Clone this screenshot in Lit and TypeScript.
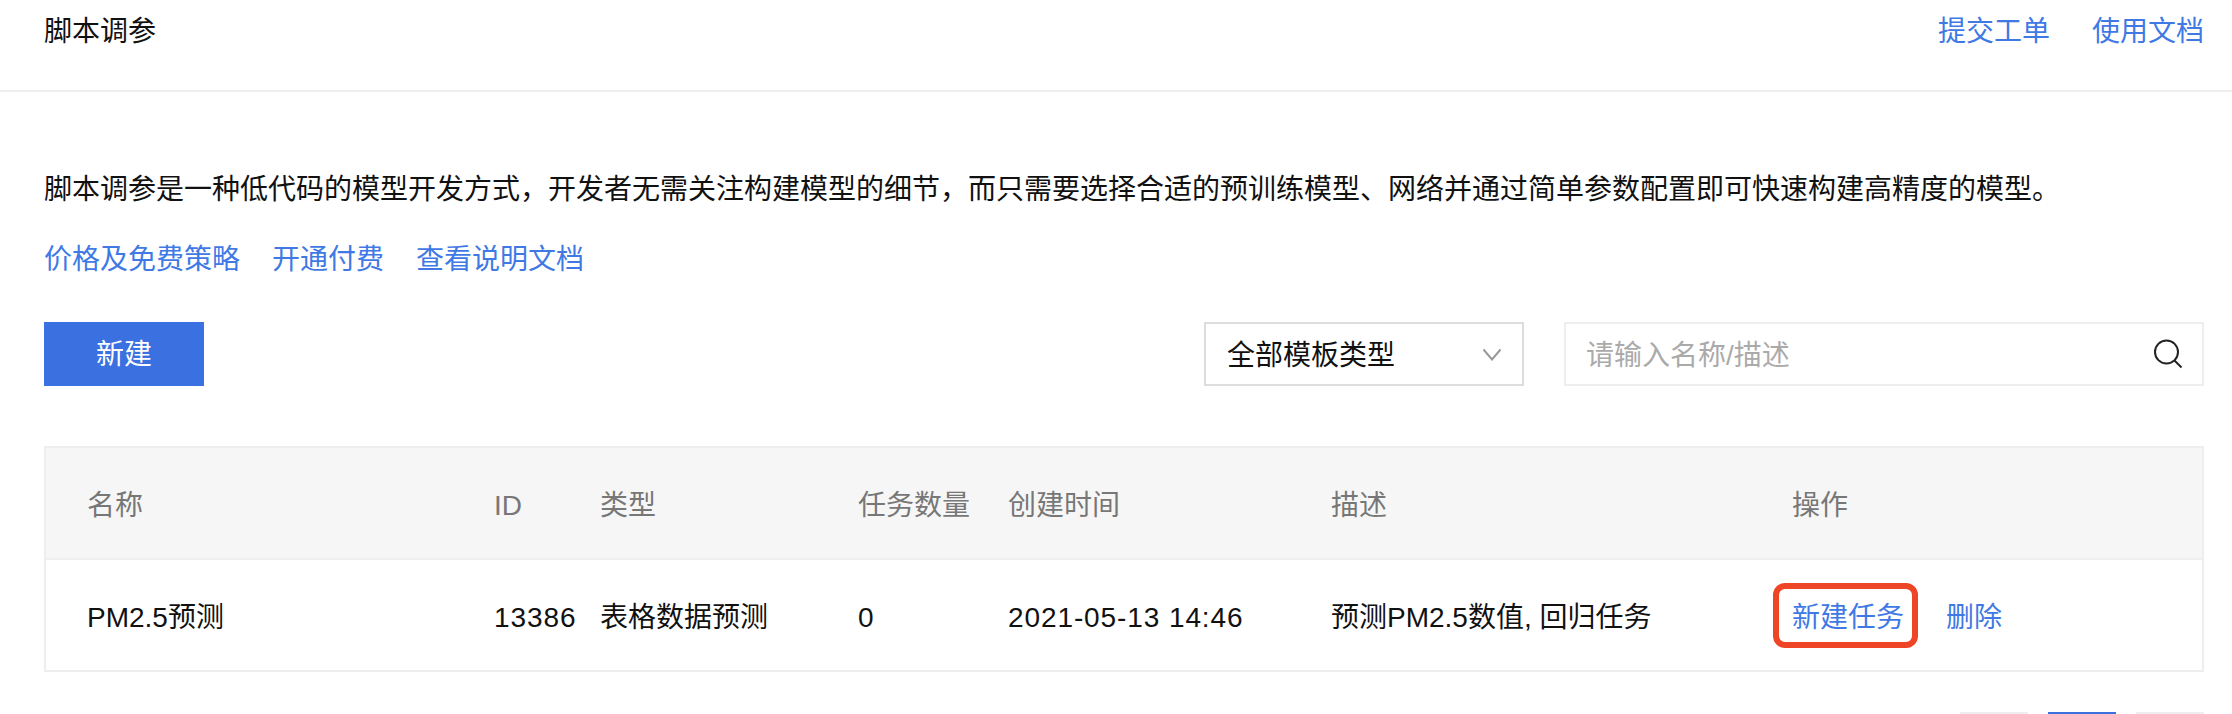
import { LitElement, html, css } from "lit";
import { customElement } from "lit/decorators.js";

@customElement("app-root")
export class AppRoot extends LitElement {
  static styles = css`
    :host {
      display: block;
      width: 2232px;
      height: 714px;
      overflow: hidden;
      background: #fff;
      color: #111;
      font-family: "Liberation Sans", "Noto Sans CJK SC", sans-serif;
      font-size: 28px;
      font-weight: 400;
      line-height: 40px;
    }
    a { color: #4079e4; text-decoration: none; }
    .head {
      height: 90px;
      box-sizing: content-box;
      border-bottom: 2px solid #eeeeee;
      padding: 0 28px 0 44px;
      display: flex;
      justify-content: space-between;
      align-items: center;
    }
    .head > div { margin-top: -26px; }
    .head-links { display: flex; gap: 42px; }
    .body { padding: 78px 28px 0 44px; }
    .desc { height: 40px; white-space: nowrap; }
    .links { display: flex; gap: 32px; margin-top: 30px; height: 40px; }
    .toolbar { display: flex; align-items: stretch; margin-top: 42px; height: 64px; }
    .btn {
      width: 160px;
      padding-top: 2px;
      box-sizing: border-box;
      background: #3a70e0;
      color: #fff;
      display: flex;
      align-items: center;
      justify-content: center;
    }
    .select {
      margin-left: auto;
      width: 320px;
      box-sizing: border-box;
      border: 2px solid #dddddd;
      padding: 0 20px 0 21px;
      display: flex;
      align-items: center;
      justify-content: space-between;
    }
    .select span, .ph { margin-top: 4px; }
    .search {
      margin-left: 40px;
      width: 640px;
      box-sizing: border-box;
      border: 2px solid #eeeeee;
      padding: 0 19px 0 20px;
      display: flex;
      align-items: center;
      justify-content: space-between;
    }
    .ph { color: #aaaaaa; }
    svg { display: block; flex: none; }
    .table {
      margin-top: 60px;
      border: 2px solid #eeeeee;
    }
    .row {
      display: grid;
      grid-template-columns: 407px 106px 258px 150px 323px 461px 1fr;
      padding-left: 41px;
      align-items: center;
      box-sizing: border-box;
    }
    .row.th {
      height: 112px;
      padding-top: 6px;
      background: #f6f6f6;
      color: #777777;
      border-bottom: 2px solid #eeeeee;
    }
    .row.td { height: 110px; padding-top: 5px; }
    .num { letter-spacing: 0.9px; }
    .ops { display: flex; align-items: center; gap: 42px; position: relative; }
    .hl {
      position: absolute;
      left: -19px;
      top: -15px;
      width: 145px;
      height: 65px;
      box-sizing: border-box;
      border: 6px solid #ef4527;
      border-radius: 12px;
    }
    .pager { display: flex; justify-content: flex-end; gap: 20px; margin-top: 40px; }
    .page { width: 68px; height: 60px; box-sizing: border-box; border: 2px solid #eeeeee; }
    .page.on { background: #3a70e0; border-color: #3a70e0; }
  `;

  render() {
    return html`
      <div class="head">
        <div>脚本调参</div>
        <div class="head-links"><a>提交工单</a><a>使用文档</a></div>
      </div>
      <div class="body">
        <div class="desc">脚本调参是一种低代码的模型开发方式，开发者无需关注构建模型的细节，而只需要选择合适的预训练模型、网络并通过简单参数配置即可快速构建高精度的模型。</div>
        <div class="links"><a>价格及免费策略</a><a>开通付费</a><a>查看说明文档</a></div>
        <div class="toolbar">
          <div class="btn">新建</div>
          <div class="select">
            <span>全部模板类型</span>
            <svg width="20" height="13" viewBox="0 0 20 13" fill="none" stroke="#999" stroke-width="2"><path d="M1.5 1.5l8.5 10 8.5-10"/></svg>
          </div>
          <div class="search">
            <span class="ph">请输入名称/描述</span>
            <svg width="30" height="30" viewBox="0 0 30 30" fill="none" stroke="#222" stroke-width="2"><circle cx="13.5" cy="13" r="11.5"/><path d="M21.5 21.5l7 7"/></svg>
          </div>
        </div>
        <div class="table">
          <div class="row th">
            <div>名称</div><div>ID</div><div>类型</div><div>任务数量</div><div>创建时间</div><div>描述</div><div>操作</div>
          </div>
          <div class="row td">
            <div>PM2.5预测</div><div class="num">13386</div><div>表格数据预测</div><div>0</div><div class="num">2021-05-13 14:46</div><div>预测PM2.5数值, 回归任务</div>
            <div class="ops"><a>新建任务</a><a>删除</a><span class="hl"></span></div>
          </div>
        </div>
        <div class="pager"><div class="page"></div><div class="page on"></div><div class="page"></div></div>
      </div>
    `;
  }
}
